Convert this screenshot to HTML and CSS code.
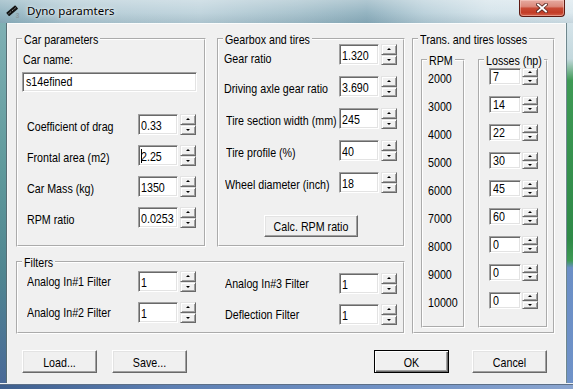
FILE: index.html
```html
<!DOCTYPE html>
<html>
<head>
<meta charset="utf-8">
<title>Dyno paramters</title>
<link rel="stylesheet" href="styles.css">
</head>
<body>
<div class="window">
  <div class="titlebar">
    <svg class="appicon" viewBox="0 0 16 16" width="16" height="16">
      <g transform="rotate(-40 8 8)">
        <rect x="1.5" y="5" width="12" height="4.5" rx="0.6" fill="#111"/>
        <line x1="3" y1="7.2" x2="12.5" y2="7.2" stroke="#cfcfcf" stroke-width="0.9" stroke-dasharray="1 1.2"/>
      </g>
      <text x="10.5" y="14.5" font-size="7" font-weight="bold" fill="#8c9ca3" font-family="Liberation Sans, sans-serif">3</text>
    </svg>
    <span class="title">Dyno paramters</span>
    <div class="close">
      <svg viewBox="0 0 12 10" width="12" height="10">
        <path d="M2 1.5 L10 8.5 M10 1.5 L2 8.5" stroke="#5a2a24" stroke-width="3.6" stroke-linecap="square"/>
        <path d="M2 1.5 L10 8.5 M10 1.5 L2 8.5" stroke="#fff" stroke-width="1.9" stroke-linecap="square"/>
      </svg>
    </div>
  </div>
  <div class="middle">
    <div class="frame-l"></div>
    <div class="client">
      <div class="top">
        <div class="leftcol">
          <div class="row1">
            <fieldset class="grp car">
              <legend><span class="t">Car parameters</span></legend>
              <div class="car-inner">
                <div class="lbl-name"><span class="t">Car name:</span></div>
                <div class="edit namebox"><span class="t">s14efined</span></div>
                <div class="rows">
                  <div class="row"><div class="lbl"><span class="t">Coefficient of drag</span></div><div class="spin"><div class="edit"><span class="t">0.33</span></div><div class="arrows"><div class="arr up"></div><div class="arr dn"></div></div></div></div>
                  <div class="row"><div class="lbl"><span class="t">Frontal area (m2)</span></div><div class="spin"><div class="edit"><span class="caret"></span><span class="t">2.25</span></div><div class="arrows"><div class="arr up"></div><div class="arr dn"></div></div></div></div>
                  <div class="row"><div class="lbl"><span class="t">Car Mass (kg)</span></div><div class="spin"><div class="edit"><span class="t">1350</span></div><div class="arrows"><div class="arr up"></div><div class="arr dn"></div></div></div></div>
                  <div class="row"><div class="lbl"><span class="t">RPM ratio</span></div><div class="spin"><div class="edit"><span class="t">0.0253</span></div><div class="arrows"><div class="arr up"></div><div class="arr dn"></div></div></div></div>
                </div>
              </div>
            </fieldset>
            <fieldset class="grp gear">
              <legend><span class="t">Gearbox and tires</span></legend>
              <div class="gear-inner">
                <div class="grows">
                  <div class="row"><div class="lbl lo"><span class="t">Gear ratio</span></div><div class="spin"><div class="edit"><span class="t">1.320</span></div><div class="arrows"><div class="arr up"></div><div class="arr dn"></div></div></div></div>
                  <div class="row"><div class="lbl"><span class="t">Driving axle gear ratio</span></div><div class="spin"><div class="edit"><span class="t">3.690</span></div><div class="arrows"><div class="arr up"></div><div class="arr dn"></div></div></div></div>
                  <div class="row"><div class="lbl in2"><span class="t">Tire section width (mm)</span></div><div class="spin"><div class="edit"><span class="t">245</span></div><div class="arrows"><div class="arr up"></div><div class="arr dn"></div></div></div></div>
                  <div class="row"><div class="lbl in2"><span class="t">Tire profile (%)</span></div><div class="spin"><div class="edit"><span class="t">40</span></div><div class="arrows"><div class="arr up"></div><div class="arr dn"></div></div></div></div>
                  <div class="row"><div class="lbl in1"><span class="t">Wheel diameter (inch)</span></div><div class="spin"><div class="edit"><span class="t">18</span></div><div class="arrows"><div class="arr up"></div><div class="arr dn"></div></div></div></div>
                </div>
                <div class="btn calc"><span class="t">Calc. RPM ratio</span></div>
              </div>
            </fieldset>
          </div>
          <fieldset class="grp filters">
            <legend><span class="t">Filters</span></legend>
            <div class="filt-inner">
              <div class="fcol1">
                <div class="row"><div class="lbl"><span class="t">Analog In#1 Filter</span></div><div class="spin"><div class="edit"><span class="t">1</span></div><div class="arrows"><div class="arr up"></div><div class="arr dn"></div></div></div></div>
                <div class="row"><div class="lbl"><span class="t">Analog In#2 Filter</span></div><div class="spin"><div class="edit"><span class="t">1</span></div><div class="arrows"><div class="arr up"></div><div class="arr dn"></div></div></div></div>
              </div>
              <div class="fcol2">
                <div class="row"><div class="lbl"><span class="t">Analog In#3 Filter</span></div><div class="spin"><div class="edit"><span class="t">1</span></div><div class="arrows"><div class="arr up"></div><div class="arr dn"></div></div></div></div>
                <div class="row"><div class="lbl"><span class="t">Deflection Filter</span></div><div class="spin"><div class="edit"><span class="t">1</span></div><div class="arrows"><div class="arr up"></div><div class="arr dn"></div></div></div></div>
              </div>
            </div>
          </fieldset>
        </div>
        <fieldset class="grp trans">
          <legend><span class="t">Trans. and tires losses</span></legend>
          <div class="trans-inner">
            <fieldset class="grp rpm">
              <legend><span class="t">RPM</span></legend>
              <div class="rpm-list">
                <div class="rpmv"><span class="t">2000</span></div>
                <div class="rpmv"><span class="t">3000</span></div>
                <div class="rpmv"><span class="t">4000</span></div>
                <div class="rpmv"><span class="t">5000</span></div>
                <div class="rpmv"><span class="t">6000</span></div>
                <div class="rpmv"><span class="t">7000</span></div>
                <div class="rpmv"><span class="t">8000</span></div>
                <div class="rpmv"><span class="t">9000</span></div>
                <div class="rpmv"><span class="t">10000</span></div>
              </div>
            </fieldset>
            <fieldset class="grp loss">
              <legend><span class="t">Losses (hp)</span></legend>
              <div class="loss-list">
                <div class="spin sm"><div class="edit"><span class="t">7</span></div><div class="arrows"><div class="arr up"></div><div class="arr dn"></div></div></div>
                <div class="spin sm"><div class="edit"><span class="t">14</span></div><div class="arrows"><div class="arr up"></div><div class="arr dn"></div></div></div>
                <div class="spin sm"><div class="edit"><span class="t">22</span></div><div class="arrows"><div class="arr up"></div><div class="arr dn"></div></div></div>
                <div class="spin sm"><div class="edit"><span class="t">30</span></div><div class="arrows"><div class="arr up"></div><div class="arr dn"></div></div></div>
                <div class="spin sm"><div class="edit"><span class="t">45</span></div><div class="arrows"><div class="arr up"></div><div class="arr dn"></div></div></div>
                <div class="spin sm"><div class="edit"><span class="t">60</span></div><div class="arrows"><div class="arr up"></div><div class="arr dn"></div></div></div>
                <div class="spin sm"><div class="edit"><span class="t">0</span></div><div class="arrows"><div class="arr up"></div><div class="arr dn"></div></div></div>
                <div class="spin sm"><div class="edit"><span class="t">0</span></div><div class="arrows"><div class="arr up"></div><div class="arr dn"></div></div></div>
                <div class="spin sm"><div class="edit"><span class="t">0</span></div><div class="arrows"><div class="arr up"></div><div class="arr dn"></div></div></div>
              </div>
            </fieldset>
          </div>
        </fieldset>
      </div>
      <div class="buttons">
        <div class="btn load"><span class="t">Load...</span></div>
        <div class="btn save"><span class="t">Save...</span></div>
        <div class="btn def ok"><span class="t">OK</span></div>
        <div class="btn cancel"><span class="t">Cancel</span></div>
      </div>
    </div>
    <div class="frame-r"></div>
  </div>
  <div class="frame-b"></div>
</div>
</body>
</html>
```
FILE: styles.css
```css
* { box-sizing: border-box; }
html, body { margin: 0; padding: 0; }
body {
  width: 573px;
  height: 389px;
  overflow: hidden;
  font-family: "Liberation Sans", Arial, sans-serif;
  font-size: 10.7px;
  color: #000;
  background: #6d8fc4;
}
.t { display: inline-block; transform: scaleY(1.2); white-space: nowrap; }
.window { width: 573px; height: 389px; display: flex; flex-direction: column; }

/* title bar */
.titlebar {
  height: 23px;
  flex: none;
  display: flex;
  align-items: flex-start;
  background:
    linear-gradient(180deg, rgba(255,255,255,0.3) 0%, rgba(255,255,255,0.05) 55%, rgba(40,80,100,0.12) 100%),
    linear-gradient(90deg, #8fb2bf 0%, #b3cbd5 12%, #bed3dc 35%, #a6c1cc 52%, #8fb0be 64%, #b9d0da 74%, #d4e3ea 85%, #dbe8ee 100%);
}
.appicon { margin: 3px 0 0 5px; flex: none; }
.title {
  font-family: "Noto Sans", "Open Sans", sans-serif;
  font-size: 11.5px;
  line-height: 16px;
  margin: 3px 0 0 6px;
  color: #000;
  text-shadow: 0 0 5px rgba(255,255,255,0.9), 0 0 2px rgba(255,255,255,0.8);
}
.close {
  margin-left: auto;
  margin-right: 8px;
  width: 46px;
  height: 17px;
  flex: none;
  border: 1px solid #5e1a12;
  border-top: none;
  border-radius: 0 0 4px 4px;
  background: linear-gradient(180deg, #e6aaa0 0%, #dc8a7c 40%, #c84a35 52%, #c23d27 78%, #d2604a 100%);
  box-shadow: inset 0 0 0 1px rgba(255,220,210,0.45);
  display: flex;
  align-items: center;
  justify-content: center;
}

/* frame */
.middle { display: flex; height: 360px; flex: none; }
.frame-l {
  width: 8px;
  flex: none;
  background: linear-gradient(180deg, #7fb0b4 0%, #5f9a9c 40%, #4f8590 70%, #4a6a98 100%);
  box-shadow: inset -1px 0 #f4f7f8, inset -2px 0 #586d73;
}
.frame-r {
  width: 8px;
  flex: none;
  background: linear-gradient(180deg, #d5e4ea 0%, #c3d8dd 10%, #3e9a55 16%, #2f8a48 60%, #3e9a55 66%, #6b8fc6 68%, #6f92c8 100%);
  box-shadow: inset 1px 0 #f4f7f8, inset 2px 0 #6f878d;
}
.frame-b {
  height: 6px;
  flex: none;
  background: linear-gradient(90deg, #3e5f8e 0%, #5d7fb3 30%, #7192c6 70%, #8aa5d0 100%);
  box-shadow: inset 0 1px #eef2f6, inset 0 2px #5d6f86;
}
.client {
  width: 557px;
  flex: none;
  background: #f0f0f0;
  display: flex;
  flex-direction: column;
  padding: 8px 0 0 8px;
  border-top: 1px solid #fafcfc;
}

/* group boxes */
fieldset.grp {
  margin: 0;
  padding: 0;
  border: 2px groove #ffffff;
  min-width: 0;
}
fieldset.grp > legend {
  padding: 0 2px;
  margin-left: 4px;
  line-height: 16px;
}
.gear > legend, .trans > legend, .rpm > legend, .loss > legend { margin-left: 5px; }

.top { display: flex; gap: 7px; margin-top: -1px; }
.leftcol { width: 389px; display: flex; flex-direction: column; gap: 7px; }
.row1 { display: flex; gap: 11px; }

/* car */
.car { width: 190px; height: 216px; }
.car-inner { padding: 5px 0 0 4px; }
.lbl-name { padding-left: 1px; line-height: 15px; }
.edit.namebox { margin-top: 5px; width: 175px; height: 20px; padding: 1px 0 0 3px; }
.rows { margin-top: 22px; display: flex; flex-direction: column; gap: 10px; }

.row { display: flex; height: 21px; }
.lbl {
  width: 116px;
  flex: none;
  padding: 4px 0 0 5px;
  line-height: 17px;
  white-space: nowrap;
}

/* spin control */
.spin { display: flex; gap: 2px; height: 21px; flex: none; }
.edit {
  width: 40px;
  height: 100%;
  background: #fff;
  border: 1px solid;
  border-color: #a0a0a0 #ffffff #ffffff #a0a0a0;
  box-shadow: inset 1px 1px #696969, inset -1px -1px #e3e3e3;
  padding: 3px 0 0 2px;
  line-height: 15px;
  white-space: nowrap;
  overflow: hidden;
}
.caret { display: inline-block; width: 1px; height: 14px; background: #000; vertical-align: -3px; margin-right: -1px; }
.arrows { width: 16px; display: flex; flex-direction: column; }
.arr {
  flex: 1;
  background: #f0f0f0;
  border: 1px solid;
  border-color: #e3e3e3 #696969 #696969 #e3e3e3;
  box-shadow: inset 1px 1px #ffffff, inset -1px -1px #a0a0a0;
  display: flex;
  align-items: center;
  justify-content: center;
}
.arr::before {
  content: "";
  width: 0;
  height: 0;
  border-left: 2px solid transparent;
  border-right: 2px solid transparent;
}
.arr.up::before { border-bottom: 2px solid #000; }
.arr.dn::before { border-top: 2px solid #000; }

/* gear */
.gear { width: 188px; height: 216px; }
.gear-inner { display: flex; flex-direction: column; }
.grows { margin-top: -3px; display: flex; flex-direction: column; gap: 11px; }
.gear .lbl { width: 120px; }
.gear .lbl.lo { padding-top: 6px; }
.gear .lbl.in2 { padding-left: 7px; }
.gear .lbl.in1 { padding-left: 6px; }
.btn {
  width: 75px;
  height: 23px;
  background: #f0f0f0;
  border: 1px solid;
  border-color: #ffffff #696969 #696969 #ffffff;
  box-shadow: inset -1px -1px #a0a0a0, inset 1px 1px #e3e3e3;
  display: flex;
  align-items: center;
  justify-content: center;
  white-space: nowrap;
}
.btn.calc { width: 94px; height: 22px; margin-top: 22px; align-self: center; }
.btn.def {
  border-color: #000;
  box-shadow: inset 1px 1px #ffffff, inset -1px -1px #696969, inset -2px -2px #a0a0a0;
}

/* filters */
.filters { width: 389px; height: 80px; }
.filt-inner { display: flex; padding: 1px 0 0 4px; }
.fcol1 { width: 197px; display: flex; flex-direction: column; gap: 10px; }
.fcol2 { display: flex; flex-direction: column; gap: 10px; padding-top: 2px; }
.filters .lbl { padding-top: 2px; }
.fcol2 .lbl { width: 120px; padding-left: 6px; }

/* trans */
.trans { width: 143px; height: 303px; }
.trans-inner { display: flex; gap: 13px; padding: 5px 0 0 7px; }
.rpm { width: 44px; height: 276px; }
.loss { width: 70px; height: 276px; }
.rpm-list { display: flex; flex-direction: column; gap: 11px; padding: 2px 0 0 5px; }
.rpmv { height: 17px; line-height: 17px; }
.loss-list { display: flex; flex-direction: column; gap: 11px; padding: 0 0 0 9px; }
.spin.sm { height: 17px; gap: 1px; }
.spin.sm .edit { width: 32px; padding: 0 0 0 3px; }

/* bottom buttons */
.buttons { display: flex; margin-top: 16px; padding-left: 6px; }
.btn.save { margin-left: 15px; }
.btn.ok { margin-left: auto; }
.btn.cancel { margin-left: 23px; margin-right: 18px; }
```
